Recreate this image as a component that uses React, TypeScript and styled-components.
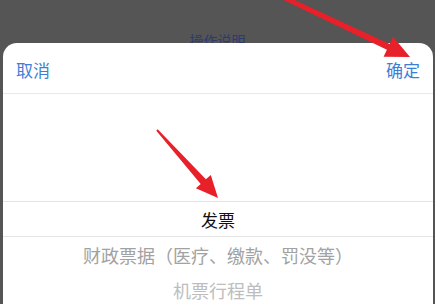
import React from "react";
import styled, { createGlobalStyle } from "styled-components";

const GlobalStyle = createGlobalStyle`
    body {
        margin: 0;
        background: #555555;
        font-family: "Noto Sans CJK SC", "Noto Sans", sans-serif;
    }
`;

const Page = styled.div`
    position: relative;
    width: 435px;
    height: 304px;
    overflow: hidden;
    background: #555555;
`;

const Backdrop = styled.div`
    height: 43px;
    box-sizing: border-box;
    padding-top: 31px;
    display: flex;
    justify-content: center;
    overflow: hidden;
`;

const HintText = styled.span`
    font-size: 14px;
    line-height: 18px;
    color: #2b3b70;
`;

const Sheet = styled.div`
    margin: 0 2px 0 3px;
    height: 261px;
    background: #ffffff;
    border-radius: 14px 14px 0 0;
    overflow: hidden;
`;

const Header = styled.div`
    height: 51px;
    box-sizing: border-box;
    padding: 2px 13px 0 13px;
    display: flex;
    align-items: center;
    justify-content: space-between;
    border-bottom: 1px solid #e8e8e8;
`;

const HeaderButton = styled.span`
    font-size: 17px;
    color: #3d7fd6;
    line-height: 1;
`;

const Picker = styled.div`
    padding-top: 107px;
`;

const Row = styled.div<{ $level: number; $selected?: boolean }>`
    height: ${p => (p.$selected ? "34px" : "35px")};
    display: flex;
    align-items: center;
    justify-content: center;
    font-size: ${p => (p.$selected ? "17px" : "18px")};
    color: ${p => ["#111111", "#a2a2a2", "#bdbdbd"][p.$level]};
    border-top: ${p => (p.$selected ? "1px solid #e4e4e4" : "none")};
    border-bottom: ${p => (p.$selected ? "1px solid #e4e4e4" : "none")};
`;

const Overlay = styled.svg`
    position: absolute;
    left: 0;
    top: 0;
    pointer-events: none;
`;

const options = ["发票", "财政票据（医疗、缴款、罚没等）", "机票行程单"];

// 箭头：尾部细，头部三角
function arrowPoints(x1: number, y1: number, x2: number, y2: number, tailW: number, shaftW: number, headLen: number, headW: number) {
    const dx = x2 - x1;
    const dy = y2 - y1;
    const len = Math.hypot(dx, dy);
    const ux = dx / len;
    const uy = dy / len;
    const px = -uy;
    const py = ux;
    const bx = x2 - ux * headLen;
    const by = y2 - uy * headLen;
    const pts = [
        [x1 + px * tailW, y1 + py * tailW],
        [bx + px * shaftW, by + py * shaftW],
        [bx + px * headW, by + py * headW],
        [x2, y2],
        [bx - px * headW, by - py * headW],
        [bx - px * shaftW, by - py * shaftW],
        [x1 - px * tailW, y1 - py * tailW],
    ];
    return pts.map(p => p[0].toFixed(1) + "," + p[1].toFixed(1)).join(" ");
}

export default function App() {
    return (
        <Page>
            <GlobalStyle />
            <Backdrop>
                <HintText>操作说明</HintText>
            </Backdrop>
            <Sheet>
                <Header>
                    <HeaderButton>取消</HeaderButton>
                    <HeaderButton>确定</HeaderButton>
                </Header>
                <Picker>
                    {options.map((o, i) => (
                        <Row key={o} $level={i} $selected={i === 0}>
                            {o}
                        </Row>
                    ))}
                </Picker>
            </Sheet>
            <Overlay width={435} height={304}>
                <polygon points={arrowPoints(272, -8, 410, 57, 2.2, 3.2, 24, 11)} fill="#e8202a" />
                <polygon points={arrowPoints(157, 130, 218, 198, 1, 3.5, 22, 10)} fill="#e8202a" />
            </Overlay>
        </Page>
    );
}
